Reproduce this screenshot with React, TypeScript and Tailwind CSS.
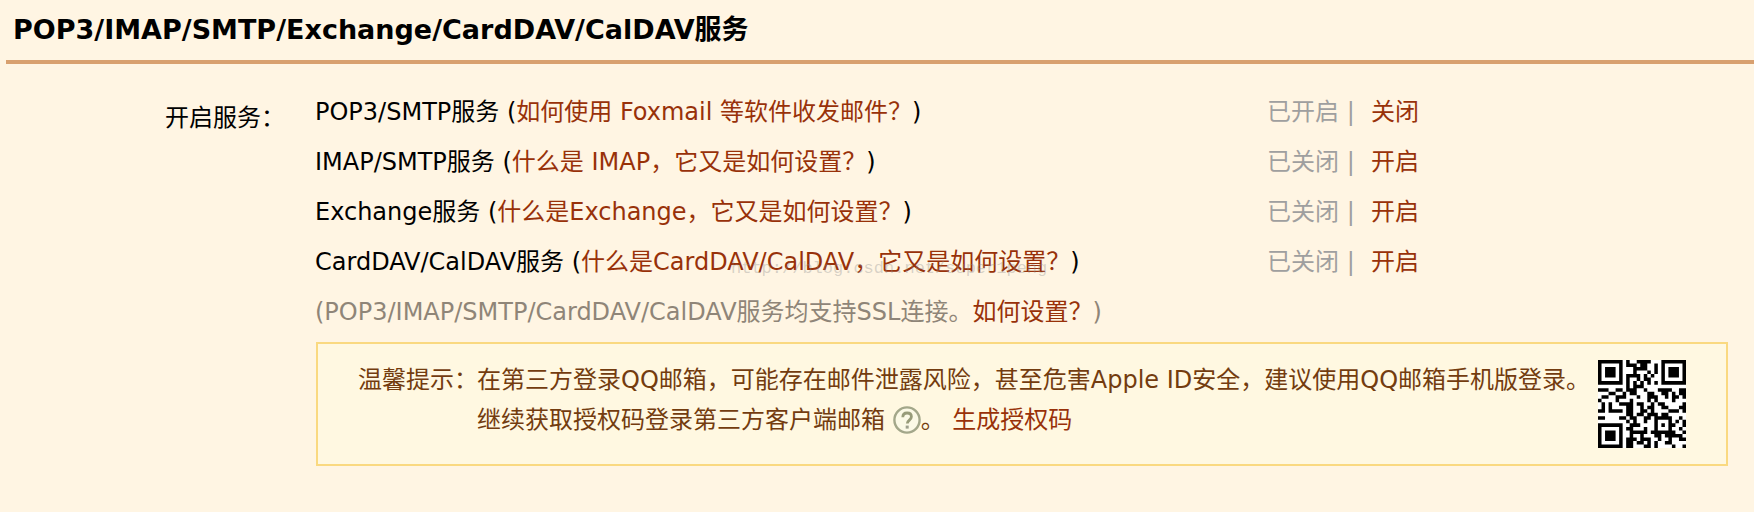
const QR_SIZE = 25;
const QR_DATA_WORDS = 34;
const QR_CHECK_WORDS = 10;

function gfMultiply(a: number, b: number): number {
  let product = 0;
  for (let i = 7; i >= 0; i--) {
    product = (product << 1) ^ ((product >>> 7) * 0x11d);
    product ^= ((b >>> i) & 1) * a;
  }
  return product;
}

function checkWords(data: number[]): number[] {
  const divisor: number[] = Array(QR_CHECK_WORDS).fill(0);
  divisor[QR_CHECK_WORDS - 1] = 1;
  let root = 1;
  for (let i = 0; i < QR_CHECK_WORDS; i++) {
    for (let j = 0; j < QR_CHECK_WORDS; j++) {
      divisor[j] = gfMultiply(divisor[j], root);
      if (j + 1 < QR_CHECK_WORDS) divisor[j] ^= divisor[j + 1];
    }
    root = gfMultiply(root, 2);
  }
  const result: number[] = Array(QR_CHECK_WORDS).fill(0);
  for (const word of data) {
    const factor = word ^ (result.shift() as number);
    result.push(0);
    divisor.forEach((d, i) => {
      result[i] ^= gfMultiply(d, factor);
    });
  }
  return result;
}

/* Version 2 symbol, error correction level L, mask 1. */
function encodeQr(text: string): boolean[][] {
  const bits: number[] = [];
  const push = (value: number, length: number) => {
    for (let i = length - 1; i >= 0; i--) bits.push((value >>> i) & 1);
  };
  push(4, 4);
  push(text.length, 8);
  for (const ch of text) push(ch.charCodeAt(0), 8);
  push(0, 4);
  for (let pad = 0xec; bits.length < QR_DATA_WORDS * 8; pad ^= 0xec ^ 0x11) push(pad, 8);

  const data: number[] = [];
  for (let i = 0; i < bits.length; i += 8) data.push(parseInt(bits.slice(i, i + 8).join(""), 2));
  const words = [...data, ...checkWords(data)];

  const dark: boolean[][] = Array.from({ length: QR_SIZE }, () => Array(QR_SIZE).fill(false));
  const fixed: boolean[][] = Array.from({ length: QR_SIZE }, () => Array(QR_SIZE).fill(false));
  const set = (x: number, y: number, on: boolean) => {
    if (x < 0 || y < 0 || x >= QR_SIZE || y >= QR_SIZE) return;
    dark[y][x] = on;
    fixed[y][x] = true;
  };

  for (let i = 0; i < QR_SIZE; i++) {
    set(6, i, i % 2 === 0);
    set(i, 6, i % 2 === 0);
  }
  for (const [cx, cy] of [[3, 3], [QR_SIZE - 4, 3], [3, QR_SIZE - 4]]) {
    for (let dy = -4; dy <= 4; dy++)
      for (let dx = -4; dx <= 4; dx++) {
        const d = Math.max(Math.abs(dx), Math.abs(dy));
        set(cx + dx, cy + dy, d !== 2 && d !== 4);
      }
  }
  for (let dy = -2; dy <= 2; dy++)
    for (let dx = -2; dx <= 2; dx++) set(18 + dx, 18 + dy, Math.max(Math.abs(dx), Math.abs(dy)) !== 1);

  const format = 0b111001011110011;
  const bit = (i: number) => ((format >>> i) & 1) === 1;
  for (let i = 0; i <= 5; i++) set(8, i, bit(i));
  set(8, 7, bit(6));
  set(8, 8, bit(7));
  set(7, 8, bit(8));
  for (let i = 9; i < 15; i++) set(14 - i, 8, bit(i));
  for (let i = 0; i < 8; i++) set(QR_SIZE - 1 - i, 8, bit(i));
  for (let i = 8; i < 15; i++) set(8, QR_SIZE - 15 + i, bit(i));
  set(8, QR_SIZE - 8, true);

  let index = 0;
  for (let right = QR_SIZE - 1; right >= 1; right -= 2) {
    if (right === 6) right = 5;
    for (let step = 0; step < QR_SIZE; step++) {
      for (let j = 0; j < 2; j++) {
        const x = right - j;
        const upward = ((right + 1) & 2) === 0;
        const y = upward ? QR_SIZE - 1 - step : step;
        if (fixed[y][x]) continue;
        const on = index < words.length * 8 && ((words[index >>> 3] >>> (7 - (index & 7))) & 1) === 1;
        dark[y][x] = on !== (y % 2 === 0);
        index++;
      }
    }
  }
  return dark;
}

function QrCode({ value }: { value: string }) {
  const path = encodeQr(value)
    .flatMap((row, y) => row.map((on, x) => (on ? `M${x} ${y}h1v1h-1z` : "")))
    .join("");
  return (
    <svg viewBox="0 0 25 25" className="size-[88px] shrink-0 bg-white" aria-hidden="true">
      <path d={path} fill="#000" />
    </svg>
  );
}

function HelpIcon() {
  return (
    <svg viewBox="0 0 28 28" className="inline-block size-7 align-[-6px]" aria-hidden="true">
      <circle cx="14" cy="14" r="12.6" fill="#fbf9e6" stroke="#a3a78a" strokeWidth="2.4" />
      <path
        d="M9.8 11.2c0-2.6 1.8-4.2 4.3-4.2s4.3 1.5 4.3 3.8c0 3.2-4.1 3.4-4.1 6.7"
        fill="none"
        stroke="#979b79"
        strokeWidth="2.8"
      />
      <rect x="12.7" y="19.6" width="3" height="3" fill="#9c9f8c" />
    </svg>
  );
}

const link = "text-[#983109] hover:underline";

const services = [
  { name: "POP3/SMTP服务", help: "如何使用 Foxmail 等软件收发邮件？", state: "已开启", action: "关闭" },
  { name: "IMAP/SMTP服务", help: "什么是 IMAP，它又是如何设置？", state: "已关闭", action: "开启" },
  { name: "Exchange服务", help: "什么是Exchange，它又是如何设置？", state: "已关闭", action: "开启" },
  { name: "CardDAV/CalDAV服务", help: "什么是CardDAV/CalDAV，它又是如何设置？", state: "已关闭", action: "开启" },
];

export default function App() {
  return (
    <main
      lang="zh-CN"
      className="min-h-screen bg-[#fff5e3] pl-1.5 font-['DejaVu_Sans','Noto_Sans_CJK_SC',sans-serif] text-[24px] text-black"
    >
      <h1 className="border-b-4 border-[#d8a06f] pl-[7px] text-[27px] leading-[60px] font-bold">
        POP3/IMAP/SMTP/Exchange/CardDAV/CalDAV服务
      </h1>
      <section className="flex pt-[23px] pr-[26px]">
        <h2 className="w-[309px] shrink-0 pt-1.5 pl-[159px] leading-[50px]">开启服务：</h2>
        <div className="min-w-0 flex-1">
          <div className="relative">
            <ul>
              {services.map((s) => (
                <li key={s.name} className="flex leading-[50px]">
                  <span className="w-[952px] shrink-0">
                    {s.name} (<a href="#help" className={link}>{s.help}</a>)
                  </span>
                  <span className="w-[104px] shrink-0 text-[#9f9f9f]">{s.state} |</span>
                  <a href="#toggle" className={link}>{s.action}</a>
                </li>
              ))}
            </ul>
            <span className="pointer-events-none absolute bottom-2 left-[416px] font-['Liberation_Mono',monospace] text-[17px] leading-5 text-[#8c8c8c]/35">
              http://blog.csdn.net/super1peng
            </span>
          </div>
          <p className="leading-[50px] text-[#8f8578]">
            (POP3/IMAP/SMTP/CardDAV/CalDAV服务均支持SSL连接。<a href="#ssl" className={link}>如何设置？</a>)
          </p>
          <div className="mt-[5px] ml-px flex items-start border-2 border-[#fad980] bg-[#fff8e1] px-10 py-4 leading-10 text-[#733c0f]">
            <span className="w-[119px] shrink-0 whitespace-nowrap">温馨提示：</span>
            <div className="min-w-0 flex-1 whitespace-nowrap">
              <p>在第三方登录QQ邮箱，可能存在邮件泄露风险，甚至危害Apple ID安全，建议使用QQ邮箱手机版登录。</p>
              <p>
                继续获取授权码登录第三方客户端邮箱 <HelpIcon />。{" "}
                <a href="#code" className={link}>生成授权码</a>
              </p>
            </div>
            <QrCode value="http://url.cn/48ScVSu" />
          </div>
        </div>
      </section>
    </main>
  );
}
